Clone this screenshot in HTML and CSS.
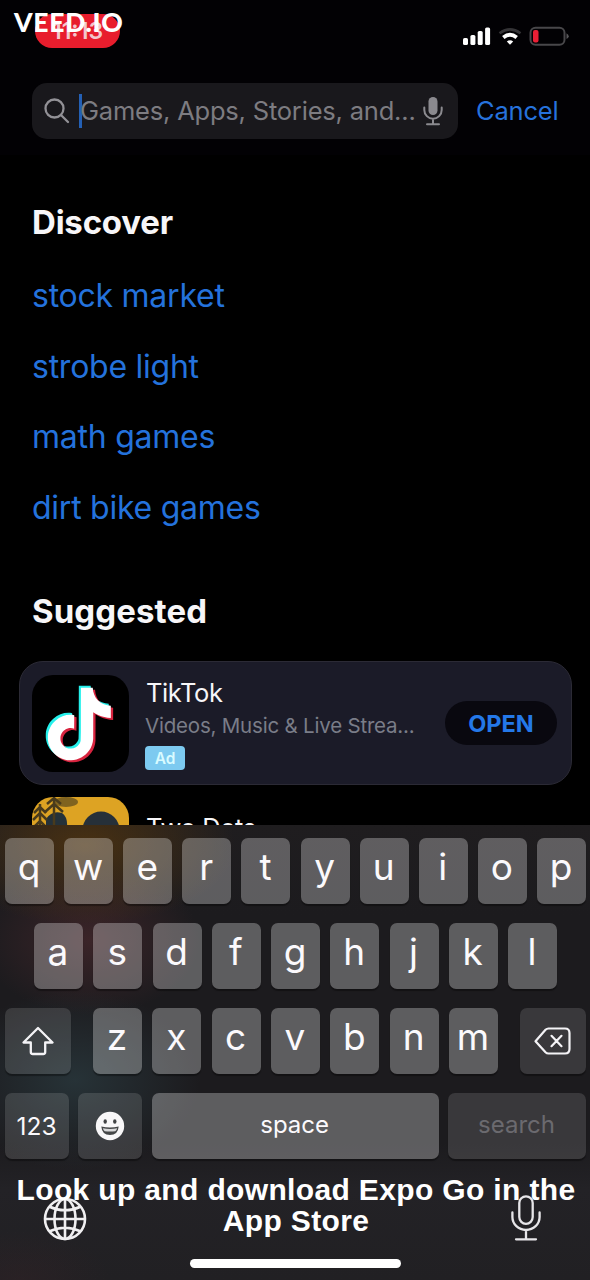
FILE: index.html
```html
<!DOCTYPE html>
<html lang="en">
<head>
<meta charset="utf-8">
<title>App Store Search</title>
<link rel="stylesheet" href="styles.css">
</head>
<body>
<div class="phone">
  <main class="content">
    <header class="status">
      <span class="time">11:13</span>
      <svg class="status-icons" width="108" height="22" viewBox="0 0 108 22">
        <g fill="#fff">
          <rect x="1" y="12" width="5" height="7" rx="1.6"/>
          <rect x="8.4" y="9" width="5" height="10" rx="1.6"/>
          <rect x="15.7" y="5" width="5" height="14" rx="1.6"/>
          <rect x="23.1" y="1.5" width="5" height="17.5" rx="1.6"/>
        </g>
        <g fill="none" stroke-width="2.600">
          <path d="M37.500 7.300Q48 -0.500 58.500 7.300" stroke="#343336"/>
          <path d="M41.300 11.500Q48 6 54.700 11.500" stroke="#fff" stroke-width="3.800"/>
        </g>
        <path d="M44.800 15.500Q48 12.800 51.200 15.500L48 18.800Z" fill="#fff"/>
        <rect x="68.500" y="1.700" width="34" height="17" rx="5" fill="none" stroke="#48474a" stroke-width="2"/>
        <path d="M104.500 7.300Q109 10.200 104.500 13Z" fill="#58575a"/>
        <rect x="71" y="4" width="5.500" height="12.500" rx="2" fill="#e91f35"/>
      </svg>
    </header>

    <div class="search-row">
      <div class="field">
        <svg class="glass" width="26" height="26" viewBox="0 0 26 26" fill="none" stroke="#929196" stroke-width="2.300" stroke-linecap="round"><circle cx="10.500" cy="10.500" r="9"/><path d="M17.200 17.200L24 24"/></svg>
        <span class="caret"></span>
        <span class="placeholder">Games, Apps, Stories, and...</span>
        <svg class="mic" width="20" height="30" viewBox="0 0 20 30" fill="none" stroke="#8b8a8f" stroke-width="2" stroke-linecap="round"><rect x="5.500" y="1" width="9" height="18" rx="4.500" fill="#8b8a8f" stroke="none"/><path d="M1.300 11.500V14a8.700 8.700 0 0 0 17.400 0V11.500M10 23V28M4 28.300H16"/></svg>
      </div>
      <span class="cancel">Cancel</span>
    </div>

    <section class="discover">
      <h2>Discover</h2>
      <ul>
        <li>stock market</li>
        <li>strobe light</li>
        <li>math games</li>
        <li>dirt bike games</li>
      </ul>
    </section>

    <section class="suggested">
      <h2>Suggested</h2>
      <article class="card">
        <svg class="app-icon" width="97" height="97" viewBox="0 0 97 97">
          <defs><path id="note" d="M12.525.02c1.31-.02 2.61-.01 3.91-.02.08 1.53.63 3.09 1.75 4.17 1.12 1.11 2.7 1.62 4.24 1.79v4.03c-1.44-.05-2.89-.35-4.2-.97-.57-.26-1.1-.59-1.62-.93-.01 2.92.01 5.84-.02 8.75-.08 1.4-.54 2.79-1.35 3.94-1.31 1.92-3.58 3.17-5.91 3.21-1.43.08-2.86-.31-4.08-1.03-2.02-1.19-3.44-3.37-3.65-5.71-.02-.5-.03-1-.01-1.49.18-1.9 1.12-3.72 2.58-4.96 1.66-1.44 3.98-2.13 6.15-1.72.02 1.48-.04 2.96-.04 4.44-.99-.32-2.15-.23-3.02.37-.63.41-1.11 1.04-1.36 1.75-.21.51-.15 1.07-.14 1.61.24 1.64 1.82 3.02 3.5 2.87 1.12-.01 2.19-.66 2.77-1.61.19-.33.4-.67.41-1.06.1-1.79.06-3.57.07-5.36.01-4.03-.01-8.05.02-12.07z"/></defs>
          <rect width="97" height="97" rx="21" fill="#000"/>
          <use href="#note" transform="translate(9 10.800) scale(3.020)" fill="#25f0eb"/>
          <use href="#note" transform="translate(13.400 14.800) scale(3.020)" fill="#d8243f"/>
          <use href="#note" transform="translate(11.100 12.800) scale(3.020)" fill="#fff"/>
        </svg>
        <div class="info">
          <span class="name">TikTok</span>
          <span class="sub">Videos, Music &amp; Live Strea...</span>
          <span class="ad">Ad</span>
        </div>
        <span class="open">OPEN</span>
      </article>
      <article class="next">
        <svg class="app-icon" width="97" height="97" viewBox="0 0 97 97">
          <defs><clipPath id="round"><rect width="97" height="97" rx="21"/></clipPath></defs>
          <g clip-path="url(#round)">
            <rect width="97" height="97" fill="#dda323"/>
            <ellipse cx="34" cy="5" rx="12" ry="5" fill="#80631f"/>
            <path d="M14 31V22Q20 13 30 16Q36 20 35 31Z" fill="#243139"/>
            <circle cx="69" cy="33" r="18.500" fill="#263039"/>
            <g fill="none" stroke="#493b1c" stroke-width="2.500">
              <path d="M8 7V31M2 16L8 10L14 16M1 23L8 16L15 23M2 30L8 24L14 30"/>
              <path d="M22 1V30M15 7L22 1L29 7M13 15L22 7L31 15"/>
            </g>
          </g>
        </svg>
        <span class="name">Two Dots</span>
      </article>
    </section>
  </main>

  <section class="keyboard">
    <div class="row"><span class="key">q</span><span class="key">w</span><span class="key">e</span><span class="key">r</span><span class="key">t</span><span class="key">y</span><span class="key">u</span><span class="key">i</span><span class="key">o</span><span class="key">p</span></div>
    <div class="row inset"><span class="key">a</span><span class="key">s</span><span class="key">d</span><span class="key">f</span><span class="key">g</span><span class="key">h</span><span class="key">j</span><span class="key">k</span><span class="key">l</span></div>
    <div class="row third">
      <span class="key dark side"><svg width="32" height="30" viewBox="0 0 32 30" fill="none" stroke="#f4f3f6" stroke-width="2.300" stroke-linejoin="round"><path d="M16 2L30.500 16.500H23.200V26Q23.200 28 21.200 28H10.800Q8.800 28 8.800 26V16.500H1.500Z"/></svg></span>
      <div class="letters"><span class="key">z</span><span class="key">x</span><span class="key">c</span><span class="key">v</span><span class="key">b</span><span class="key">n</span><span class="key">m</span></div>
      <span class="key dark side"><svg width="38" height="28" viewBox="0 0 38 28" fill="none" stroke="#f4f3f6" stroke-width="2.200" stroke-linejoin="round" stroke-linecap="round"><path d="M14.500 1.500H31Q35.500 1.500 35.500 6V22Q35.500 26.500 31 26.500H14.500Q12.800 26.500 11.500 25.200L1.500 14.200L11.500 2.800Q12.800 1.500 14.500 1.500ZM17.500 8.800L27.500 19.200M27.500 8.800L17.500 19.200"/></svg></span>
    </div>
    <div class="row">
      <span class="key dark num">123</span>
      <span class="key dark emoji"><svg width="30" height="30" viewBox="0 0 30 30"><circle cx="15" cy="15" r="14.200" fill="#f8f7f8"/><ellipse cx="10.200" cy="10.500" rx="1.700" ry="2.200" fill="#414344"/><ellipse cx="19.800" cy="10.500" rx="1.700" ry="2.200" fill="#414344"/><path d="M6.300 15.500Q15 17.500 23.700 15.500Q23 24 15 24Q7 24 6.300 15.500Z" fill="#444647"/><path d="M7.800 17.300Q15 18.800 22.200 17.300Q21.600 19.500 20.300 20.200Q15 21 9.700 20.200Q8.400 19.500 7.800 17.300Z" fill="#d8d8d9"/></svg></span>
      <span class="key space">space</span>
      <span class="key dark search">search</span>
    </div>
    <div class="tools">
      <svg width="44" height="44" viewBox="0 0 44 44" fill="none" stroke="#f0eff1" stroke-width="2.600"><circle cx="22" cy="22" r="20"/><ellipse cx="22" cy="22" rx="10.500" ry="20"/><path d="M22 2V42M2 22H42M6 9.500Q22 17 38 9.500M6 34.500Q22 27 38 34.500"/></svg>
      <svg class="dictate" width="30" height="46" viewBox="0 0 30 46" fill="none" stroke="#e7e6e9" stroke-width="2.300" stroke-linecap="round"><rect x="8.300" y="1.300" width="13.400" height="27.500" rx="6.700"/><path d="M1.400 17.500V22a13.600 13 0 0 0 27.200 0V17.500M15 35.500V44M5 44.300H25"/></svg>
    </div>
    <div class="home"></div>
  </section>

  <div class="watermark">VEED.IO</div>
  <div class="caption">Look up and download Expo Go in the<br>App Store</div>
</div>
</body>
</html>
```
FILE: styles.css
```css
* { box-sizing: border-box; }
body { margin: 0; background: #000; }
.phone {
  position: relative;
  width: 590px;
  height: 1280px;
  overflow: hidden;
  display: flex;
  flex-direction: column;
  background: #000;
  color: #f7f6f8;
  font-family: Inter, "Liberation Sans", sans-serif;
  white-space: nowrap;
}
.content { height: 825px; overflow: hidden; display: flex; flex-direction: column; }
.status {
  height: 83px;
  flex: none;
  padding: 14px 20px 0 35px;
  display: flex;
  justify-content: space-between;
  background: #020104;
}
.time {
  width: 85px;
  height: 34px;
  border-radius: 17px;
  background: #e81d2d;
  color: #f3c7cc;
  font-size: 23px;
  font-weight: 600;
  line-height: 34px;
  text-align: center;
}
.status-icons { margin-top: 12px; }
.search-row {
  height: 72px;
  flex: none;
  padding-left: 32px;
  display: flex;
  align-items: flex-start;
  background: #020104;
}
.field {
  width: 426px;
  height: 56px;
  border-radius: 15px;
  background: #19181c;
  display: flex;
  align-items: center;
  padding-left: 12px;
}
.caret { width: 3px; height: 34px; margin-left: 9px; margin-right: -2px; background: #2460b5; }
.placeholder { width: 342px; color: #7d7c81; font-size: 25.5px; line-height: 56px; letter-spacing: -0.2px; }
.mic { margin-left: 1px; }
.cancel { margin-left: 18px; font-size: 25.5px; line-height: 55px; letter-spacing: -0.2px; color: #2672dc; }
h2 { margin: 0; font-size: 33px; font-weight: 700; line-height: 41px; letter-spacing: 0.1px; }
.discover { padding: 47px 32px 0; height: 389px; flex: none; }
.discover h2 { letter-spacing: -0.2px; }
ul { list-style: none; margin: 18px 0 0; padding: 0; }
li { height: 70.5px; line-height: 70.5px; font-size: 32px; color: #2472dc; letter-spacing: -0.25px; }
.suggested { padding: 47px 18px 0 19px; }
.suggested h2 { padding-left: 13px; }
.card {
  margin-top: 29px;
  height: 124px;
  border-radius: 24px;
  border: 1.5px solid #2b2a35;
  background: #1b1b28;
  display: flex;
  align-items: center;
  padding: 0 14px 0 12px;
}
.app-icon { flex: none; }
.info { width: 300px; margin-left: 16px; display: flex; flex-direction: column; align-items: flex-start; }
.name { font-size: 25.5px; line-height: 34px; letter-spacing: -0.4px; margin-left: 1px; }
.sub { font-size: 20.5px; line-height: 32px; letter-spacing: -0.2px; color: #7a7d88; }
.ad {
  width: 40px;
  height: 24px;
  margin-top: 4px;
  border-radius: 4px;
  background: #7dcaf0;
  color: #d9fbff;
  font-size: 15.5px;
  font-weight: 600;
  line-height: 25px;
  text-align: center;
}
.open {
  width: 112px;
  height: 44px;
  border-radius: 22px;
  background: #09080f;
  color: #2478e8;
  font-size: 23.5px;
  font-weight: 700;
  line-height: 45px;
  text-align: center;
}
.next { display: flex; padding: 12px 0 0 13px; }
.next .name { margin: 14px 0 0 17px; }

.keyboard {
  flex: 1;
  padding: 12.5px 4px 0 5px;
  display: flex;
  flex-direction: column;
  gap: 19.2px;
  background:
    radial-gradient(ellipse 150px 80px at 85px 20px, rgba(92, 58, 12, .68), transparent),
    radial-gradient(ellipse 110px 75px at 90px 115px, rgba(90, 45, 50, .5), transparent),
    radial-gradient(ellipse 125px 90px at 75px 255px, rgba(46, 66, 72, .6), transparent),
    radial-gradient(ellipse 90px 50px at 20px 455px, rgba(60, 35, 40, .3), transparent),
    linear-gradient(#1f1d1f, #1c1b1e 20%, #1c1b1e 70%, #232226 80%, #212023);
}
.row { height: 66px; flex: none; display: flex; justify-content: space-between; }
.inset { padding: 0 29px; }
.key {
  width: 49px;
  height: 66px;
  border-radius: 7px;
  background: rgba(255, 255, 255, .29);
  box-shadow: 0 2px 1px rgba(0, 0, 0, .35);
  color: #fbf9fc;
  display: flex;
  align-items: center;
  justify-content: center;
  font-size: 37px;
  font-weight: 400;
  line-height: 60px;
  padding: 0 1px 7px 0;
}
.dark { background: rgba(255, 255, 255, .13); padding-bottom: 0; }
.side { width: 66px; }
.letters { width: 405px; display: flex; justify-content: space-between; }
.num { width: 64px; font-size: 24.5px; }
.emoji { width: 64px; padding: 0; }
.space { width: 287px; font-size: 24px; padding-bottom: 3px; }
.search { width: 138px; font-size: 24px; color: #6b6a6f; padding-bottom: 3px; }
.tools { height: 62px; display: flex; justify-content: space-between; padding: 19px 45px 0 38px; }
.dictate { margin-top: -2px; }
.home { width: 211px; height: 9px; border-radius: 5px; background: #fff; margin: 0 auto; }

.watermark {
  position: absolute;
  left: 14px;
  top: 6px;
  font: 900 26.5px/32px Lato, sans-serif;
  letter-spacing: 0.7px;
  color: #fff;
}
.caption {
  position: absolute;
  left: 0;
  top: 1174px;
  width: 592px;
  text-align: center;
  font: bold 30px/31px "Liberation Sans", Arial, sans-serif;
  letter-spacing: 0.35px;
  color: #fff;
}
```
